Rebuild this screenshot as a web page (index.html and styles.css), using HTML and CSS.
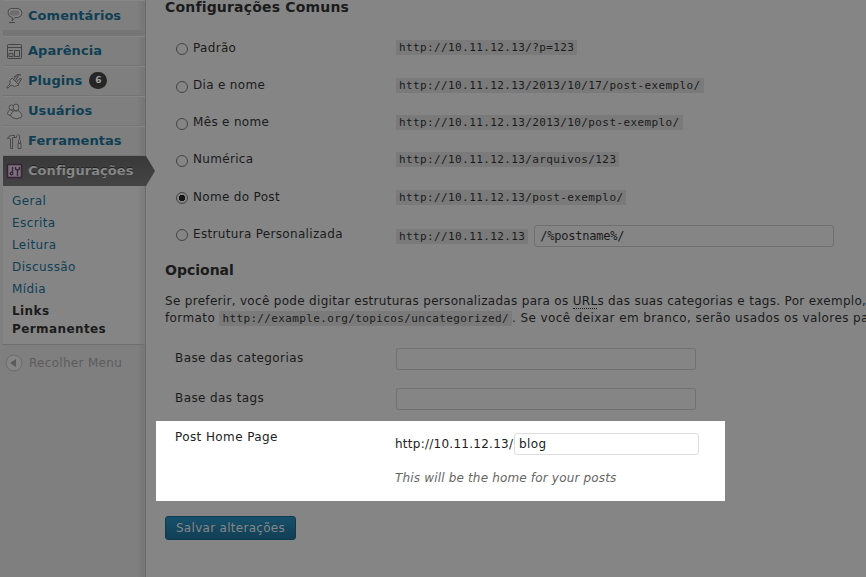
FILE: index.html
```
<!DOCTYPE html>
<html lang="pt-BR">
<head>
<meta charset="utf-8">
<title>Links Permanentes</title>
<link rel="stylesheet" href="styles.css">
</head>
<body>
<div class="page">
<nav class="sidebar">
  <a class="item first"><svg class="icon" viewBox="0 0 18 18"><path class="fill" d="M5 2.500h7q4 1 4 4.500t-4 4.500h-3l-3 3.500 .5-3.500q-4-.5-4.500-4.500t3-4.500z"/><path class="soft" d="M5.500 4.500h6q2 1 2 2.500t-2 2.500h-6q-2-1-2-2.500z"/><path class="line" d="M3 16.500h6"/></svg>Comentários</a>
  <div class="separator"></div>
  <a class="item"><svg class="icon" viewBox="0 0 18 18"><rect class="line" x="1.500" y="2.500" width="14" height="14" rx="1"/><path class="line" d="M2 5.500h13M8.500 8.500h5v6h-5zM3 8.500h4M3 11.500h4v3h-4z"/></svg>Aparência</a>
  <a class="item"><svg class="icon" viewBox="0 0 18 18"><path class="fill" d="M6 6l7 7q-5 3-8-0l-3 3H1v-1l3-3Q3 8 6 6z"/><path class="line" d="M7.500 7.500l4-5 1 1-3 5M10.500 10l4-4 1 1-3 5M8 5q4-4 7-2"/></svg>Plugins<span class="badge">6</span></a>
  <a class="item"><svg class="icon" viewBox="0 0 18 18"><circle class="fill" cx="5.500" cy="5.500" r="2.500"/><path class="fill" d="M4 7.500q-5 5 0 6h3V9z"/><ellipse class="fill" cx="10" cy="5.500" rx="2.800" ry="3.500"/><path class="fill" d="M8 8.500q-5 4-2 7 5 2.500 9 0 3-3-3-7-2 1.500-4 0z"/></svg>Usuários</a>
  <a class="item"><svg class="icon" viewBox="0 0 18 18"><path class="fill" d="M1.500 6.500q1-3 4-3h3v2h-2v11h-2v-10q-2-1-3 0zM10.500 3.500v2h-2M11.500 2.500l2 1v4l-1 1v3h2v-3l-1-1M12 11.500h3v5h-3z"/></svg>Ferramentas</a>
  <a class="item current"><svg class="icon" viewBox="0 0 18 18"><rect class="plum" x="1.500" y="2.500" width="14" height="13"/><path class="plumline" d="M6.500 5v5M11.500 8v6M9.500 5v2q2 2 4 0V5"/><circle class="plumline" cx="5.500" cy="11.500" r="1.300"/></svg>Configurações</a>
  <div class="submenu">
    <a>Geral</a><a>Escrita</a><a>Leitura</a><a>Discussão</a><a>Mídia</a><a class="on">Links Permanentes</a>
  </div>
  <a class="collapse"><svg class="arrow" viewBox="0 0 18 18"><circle cx="9" cy="9" r="8"/><path d="M5 9l6-4v8z"/></svg>Recolher Menu</a>
</nav>
<main class="content">
  <h3 class="title">Configurações Comuns</h3>
  <div class="options">
    <label class="name"><span class="radio"></span>Padrão</label><div><code>http://10.11.12.13/?p=123</code></div>
    <label class="name"><span class="radio"></span>Dia e nome</label><div><code>http://10.11.12.13/2013/10/17/post-exemplo/</code></div>
    <label class="name"><span class="radio"></span>Mês e nome</label><div><code>http://10.11.12.13/2013/10/post-exemplo/</code></div>
    <label class="name"><span class="radio"></span>Numérica</label><div><code>http://10.11.12.13/arquivos/123</code></div>
    <label class="name"><span class="radio checked"></span>Nome do Post</label><div><code>http://10.11.12.13/post-exemplo/</code></div>
    <label class="name"><span class="radio"></span>Estrutura Personalizada</label><div class="custom"><code>http://10.11.12.13</code><span class="field mono">/%postname%/</span></div>
  </div>
  <h3 class="title optional">Opcional</h3>
  <p class="intro"><span class="lead">Se preferir, você pode digitar estruturas personalizadas para os <abbr>URL</abbr>s das suas categorias e tags. Por exemplo,</span><br>formato <code>http://example.org/topicos/uncategorized/</code>. Se você deixar em branco, serão usados os valores pa</p>
  <div class="base"><span>Base das categorias</span><span class="field"></span></div>
  <div class="base"><span>Base das tags</span><span class="field"></span></div>
  <section class="spotlight">
    <span class="spotname">Post Home Page</span>
    <div>
      <div class="home"><span class="host">http://10.11.12.13/</span><span class="field bright">blog</span></div>
      <em class="hint">This will be the home for your posts</em>
    </div>
  </section>
  <button class="save">Salvar alterações</button>
</main>
</div>
</body>
</html>
```
FILE: styles.css
```
* { box-sizing: border-box; }
body { margin: 0; overflow: hidden; background: #858585; color: #1b1b1b; font: 12px/17px "DejaVu Sans", sans-serif; letter-spacing: .4px; }
.page { display: flex; width: 866px; height: 577px; overflow: hidden; }
.sidebar { flex: 0 0 146px; padding-left: 3px; background: linear-gradient(90deg, transparent 137px, rgba(0,0,0,.08) 145px, #6b6b6b 145px), #7f7f7f; }
.item { display: flex; align-items: center; position: relative; height: 30px; padding: 0 0 1px 3px; border-top: 1px solid #868686; border-bottom: 1px solid #757575; margin-right: 1px; color: #103f55; font-size: 13px; font-weight: bold; letter-spacing: .05px; }
.first { height: 31px; }
.separator { height: 5px; background: #757575; margin-right: 1px; }
.icon { width: 18px; height: 18px; margin-right: 4px; }
.line { fill: none; stroke: #454545; }
.fill { fill: #858585; stroke: #4a4a4a; }
.soft { fill: #6d6d6d; }
.plum { fill: #79707a; stroke: #39213b; stroke-width: 1.5; }
.plumline { fill: none; stroke: #39213b; stroke-width: 1.3; }
.badge { width: 18px; height: 17px; margin-left: 7px; border-radius: 9px; background: #262626; color: #a0a0a0; font-size: 9px; line-height: 17px; text-align: center; }
.current { border-color: transparent; color: #868686; text-shadow: 0 -1px 0 #222; background: linear-gradient(#393939, #444) border-box; }
.current::after { content: ""; position: absolute; left: 142px; top: -1px; width: 10px; height: 30px; background: linear-gradient(#393939, #444); clip-path: polygon(0 0, 1px 0, 100% 50%, 1px 100%, 0 100%); }
.submenu { height: 159px; padding: 4px 14px 0 9px; background: linear-gradient(90deg, transparent 134px, rgba(0,0,0,.08) 142px, #6b6b6b 142px), #858585; border-bottom: 1px solid #6e6e6e; }
.submenu a { display: block; height: 22px; line-height: 22px; color: #103f55; }
.submenu .on { color: #1b1b1b; font-weight: bold; line-height: 18px; padding-top: 2px; }
.collapse { display: flex; align-items: center; height: 36px; padding-left: 2px; color: #5c5c5c; letter-spacing: .3px; }
.arrow { width: 18px; height: 18px; margin-right: 6px; }
.arrow circle { fill: #858585; stroke: #6c6c6c; }
.arrow path { fill: #5b5b5b; }
.content { flex: 0 0 720px; overflow: hidden; }
.title { height: 29px; margin: 0 0 0 19px; font-size: 14px; line-height: 15px; letter-spacing: .18px; }
.options { display: grid; grid-template-columns: 220px auto; grid-template-rows: 38px 37px 37px 37px 38px 39px; align-items: center; margin-left: 30px; }
.name { display: flex; align-items: center; height: 19px; letter-spacing: .32px; }
.options .name:nth-last-child(2) { margin-top: -3px; }
.radio { width: 12px; height: 12px; margin: 2px 5px 0 0; border: 1px solid #444; border-radius: 50%; background: #858585; }
.checked { background: radial-gradient(circle, #151515 3px, #858585 3.500px); }
code { display: inline-block; height: 15px; padding: 0 3px; background: #7a7a7a; font: 11px/15px "DejaVu Sans Mono", monospace; letter-spacing: .39px; }
.options code { vertical-align: middle; }
.options div:nth-child(2) code { position: relative; top: -1px; }
.custom { display: flex; align-items: center; }
.custom code { margin-top: 1px; }
.custom .field { margin-left: 6px; }
.field { width: 300px; height: 22px; padding: 0 5px; border: 1px solid #707070; border-radius: 3px; line-height: 20px; }
.mono { font-family: "DejaVu Sans Mono", monospace; letter-spacing: -.22px; }
.optional { padding-top: 8px; height: 38px; letter-spacing: 0; }
.intro { height: 55px; margin: 0 0 0 19px; white-space: nowrap; }
.lead { letter-spacing: .31px; }
.intro code { line-height: 15px; height: 15px; vertical-align: 0; letter-spacing: .37px; }
abbr { display: inline-block; height: 16px; border-bottom: 1px dotted #1b1b1b; }
.base { display: grid; grid-template-columns: 221px 300px; height: 40px; padding-left: 29px; line-height: 20px; }
.spotlight { display: grid; grid-template-columns: 220px auto; width: 569px; height: 80px; margin: -7px 0 15px 10px; padding: 12px 0 0 19px; background: #fff; color: #222; }
.spotname { margin-top: -4px; }
.home { display: flex; align-items: center; height: 22px; }
.host { width: 119px; letter-spacing: .26px; }
.bright { width: 185px; border-color: #ddd; padding-left: 4px; }
.hint { display: block; margin-top: 15px; color: #666; letter-spacing: .17px; }
.save { display: block; width: 131px; height: 24px; margin-left: 19px; padding: 0; border: 1px solid #0e3a50; border-radius: 3px; background: linear-gradient(#17506b, #103f55); color: #868686; font: inherit; line-height: 20px; letter-spacing: .29px; }
```
